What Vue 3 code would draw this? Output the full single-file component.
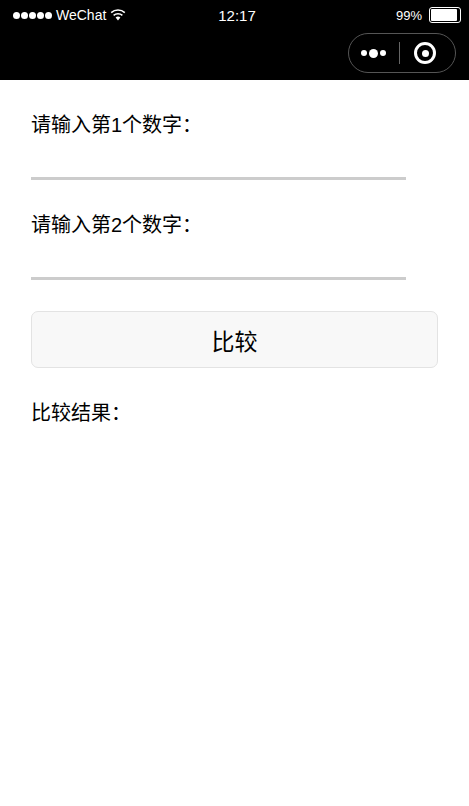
<template>
  <div class="page">
    <!-- Black phone status bar + mini program nav -->
    <header class="nav">
      <div class="status">
        <div class="status__left">
          <span class="signal" aria-hidden="true">
            <i v-for="n in 5" :key="n"></i>
          </span>
          <span class="carrier">WeChat</span>
          <svg class="wifi" width="16" height="12" viewBox="0 0 16 12" aria-hidden="true">
            <path d="M8 11.5 5.6 8.6a3.6 3.6 0 0 1 4.8 0z" fill="#fff"/>
            <path d="M3.6 6.4a6.6 6.6 0 0 1 8.8 0" fill="none" stroke="#fff" stroke-width="1.6"/>
            <path d="M1.2 3.6a10.2 10.2 0 0 1 13.6 0" fill="none" stroke="#fff" stroke-width="1.6"/>
          </svg>
        </div>
        <span class="time">12:17</span>
        <div class="status__right">
          <span class="percent">99%</span>
          <span class="battery" aria-hidden="true"><b></b></span>
        </div>
      </div>
      <div class="capsule" aria-hidden="true">
        <span class="capsule__dots"><i></i><i class="big"></i><i></i></span>
        <span class="capsule__line"></span>
        <span class="capsule__target"><i></i></span>
      </div>
    </header>

    <main class="form">
      <label class="label">请输入第1个数字：</label>
      <input class="field" type="text" />
      <label class="label label--second">请输入第2个数字：</label>
      <input class="field" type="text" />
      <button class="btn" type="button">比较</button>
      <p class="result">比较结果：</p>
    </main>
  </div>
</template>

<script setup>
</script>

<style>
html, body { margin: 0; background: #fff; }
</style>

<style scoped>
.page {
  width: 469px;
  height: 806px;
  overflow: hidden;
  font-family: "Liberation Sans", "Noto Sans CJK SC", sans-serif;
  color: #000;
}

/* ─── Nav ─────────────────────────────────── */
.nav {
  position: relative;
  height: 80px;
  background: #000;
  color: #fff;
}
.status {
  display: grid;
  grid-template-columns: 1fr auto 1fr;
  align-items: center;
  height: 30px;
  padding: 0 8px 0 13px;
  font-size: 14px;
}
.status__left { display: flex; align-items: center; gap: 4px; }
.signal { display: flex; gap: 1px; }
.signal i { width: 7px; height: 7px; border-radius: 50%; background: #fff; }
.time { font-size: 15px; }
.status__right { display: flex; align-items: center; justify-content: flex-end; gap: 7px; }
.percent { font-size: 13px; }
.battery {
  display: block;
  width: 28px;
  height: 12px;
  padding: 1px;
  border: 1px solid #fff;
  border-radius: 3px;
}
.battery b { display: block; width: 92%; height: 100%; background: #fff; border-radius: 1px; }

.capsule {
  position: absolute;
  top: 33px;
  right: 13px;
  display: flex;
  align-items: center;
  width: 108px;
  height: 40px;
  box-sizing: border-box;
  border: 1px solid #555;
  border-radius: 20px;
}
.capsule__dots { display: flex; align-items: center; gap: 2px; margin-left: 12px; }
.capsule__dots i { width: 6px; height: 6px; border-radius: 50%; background: #fff; }
.capsule__dots i.big { width: 9px; height: 9px; }
.capsule__line { width: 1px; height: 22px; background: #666; margin-left: 13px; }
.capsule__target {
  display: flex;
  align-items: center;
  justify-content: center;
  width: 22px;
  height: 22px;
  box-sizing: border-box;
  margin-left: 14px;
  border: 3px solid #fff;
  border-radius: 50%;
}
.capsule__target i { width: 7px; height: 7px; border-radius: 50%; background: #fff; }

/* ─── Form ────────────────────────────────── */
.form {
  display: flex;
  flex-direction: column;
  align-items: flex-start;
  padding: 32px 31px 0;
}
.label { font-size: 20px; line-height: 26px; }
.label--second { margin-top: 32px; }
.field {
  width: 375px;
  height: 42px;
  box-sizing: border-box;
  margin: 0;
  padding: 0;
  border: 0;
  border-bottom: 3px solid #ccc;
  outline: none;
  background: transparent;
}
.btn {
  width: 407px;
  height: 57px;
  margin-top: 31px;
  box-sizing: border-box;
  border: 1px solid #e3e3e3;
  border-radius: 7px;
  background: #f8f8f8;
  color: #000;
  font: inherit;
  font-size: 23px;
}
.result { margin: 32px 0 0; font-size: 20px; line-height: 26px; }
</style>
